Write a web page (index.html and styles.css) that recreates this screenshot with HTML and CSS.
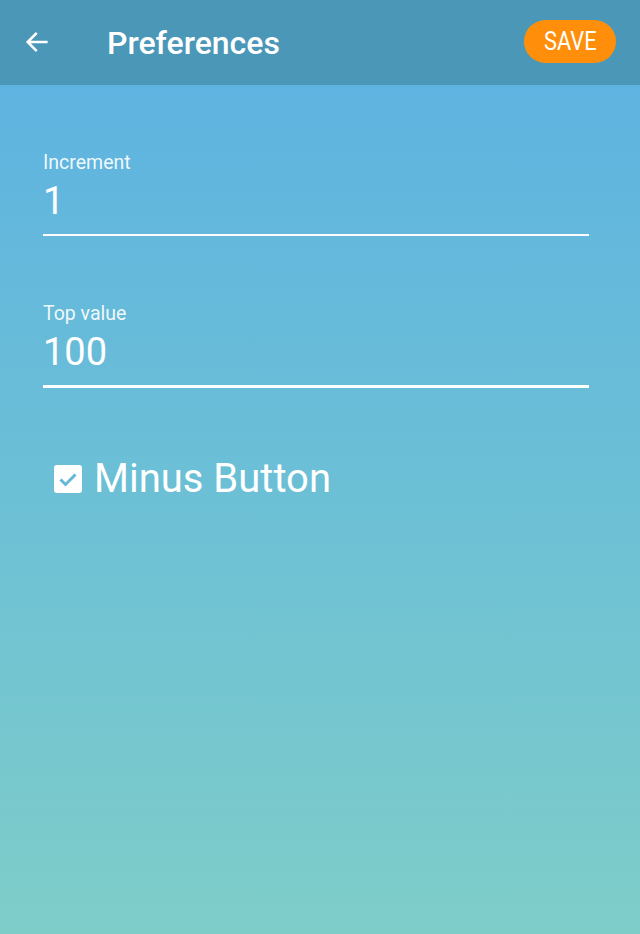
FILE: index.html
```html
<!DOCTYPE html>
<html lang="en">
<head>
    <meta charset="UTF-8">
    <meta name="viewport" content="width=device-width, initial-scale=1.0">
    <title>Preferences</title>
    <link rel="stylesheet" href="styles.css">
</head>
<body>
    <div class="screen">
        <header class="toolbar">
            <button class="back" aria-label="Back">
                <svg width="28" height="28" viewBox="0 0 24 24">
                    <path d="M20 12H4.5M11 5l-7 7 7 7" fill="none" stroke="#fff" stroke-width="2.2" stroke-linecap="square"/>
                </svg>
            </button>
            <h1 class="title">Preferences</h1>
            <button class="save"><span>SAVE</span></button>
        </header>

        <div class="form">
            <div class="field">
                <label>Increment</label>
                <div class="value">1</div>
                <div class="line"></div>
            </div>

            <div class="field">
                <label>Top value</label>
                <div class="value">100</div>
                <div class="line focused"></div>
            </div>

            <div class="check">
                <span class="box">
                    <svg width="28" height="28" viewBox="0 0 28 28">
                        <path d="M6.5 14.5l5 5 10-10" fill="none" stroke="#63b9d8" stroke-width="3"/>
                    </svg>
                </span>
                <span class="check-label">Minus Button</span>
            </div>
        </div>
    </div>
</body>
</html>
```

FILE: styles.css
```css
body {
    margin: 0;
    font-family: Roboto, "Liberation Sans", sans-serif;
    color: #fff;
}
.screen {
    height: 934px;
    background: linear-gradient(to bottom, #5cb1e3 0%, #6bbfd6 50%, #7ecdc9 100%);
}
.toolbar {
    height: 85px;
    display: flex;
    align-items: center;
    background-color: #4b97b8;
    padding: 0 24px 0 22px;
    box-sizing: border-box;
}
.back {
    background: none;
    border: none;
    padding: 0;
    width: 30px;
    height: 30px;
    display: flex;
    align-items: center;
    justify-content: center;
    margin-top: -2px;
}
.title {
    margin: 0 0 0 55px;
    font-size: 32px;
    font-weight: 500;
    flex: 1;
}
.save {
    background-color: #ff8f0a;
    border: none;
    border-radius: 22px;
    width: 92px;
    height: 43px;
    margin-top: -3px;
    color: #fff;
    font-family: Roboto, sans-serif;
    font-size: 26px;
    padding: 0;
}
.save span {
    display: inline-block;
    transform: scaleX(0.84);
}
.form {
    padding: 67px 51px 0 43px;
}
.field {
    margin-bottom: 67px;
}
.field label {
    display: block;
    font-size: 19.5px;
    line-height: 22px;
    color: rgba(255, 255, 255, 0.92);
}
.value {
    font-size: 38px;
    line-height: 42px;
    margin-top: 6px;
}
.line {
    height: 2px;
    background-color: #fff;
    margin-top: 12px;
}
.line.focused {
    height: 3px;
}
.check {
    display: flex;
    align-items: center;
    margin: 1px 0 0 11px;
}
.box {
    width: 28px;
    height: 28px;
    background-color: #fff;
    border-radius: 3px;
    display: flex;
}
.check-label {
    font-size: 40px;
    margin-left: 12px;
}
```
